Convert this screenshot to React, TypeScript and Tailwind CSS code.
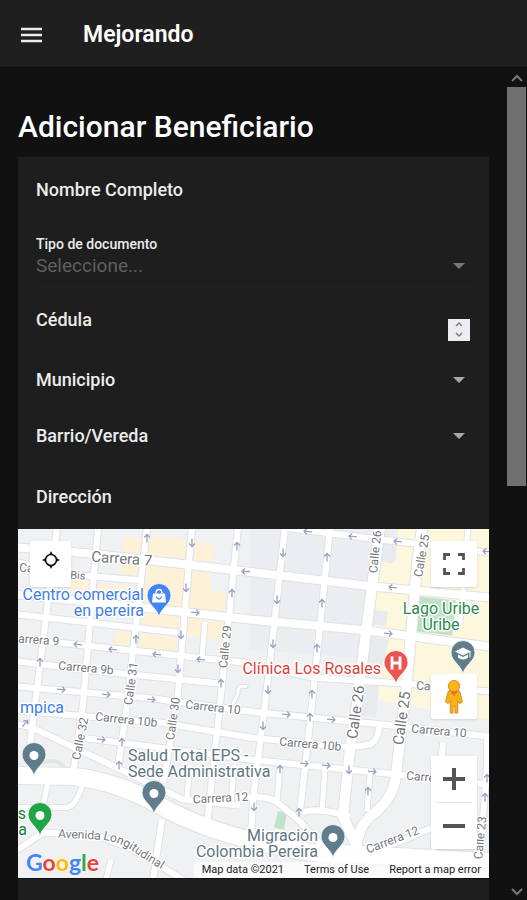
import React from "react";

type Road = { d: string; w: number };

const roads: Road[] = [
  { d: "M283 528L340 535L397 542L489 553", w: 6 },
  { d: "M18 548L90 554L143 560L255 573L373 587L489 598", w: 8 },
  { d: "M18 563L70 575L143 581", w: 6 },
  { d: "M18 595L143 608L250 620L367 631L489 647", w: 8 },
  { d: "M18 615L177 633", w: 6 },
  { d: "M18 640L57 643L243 663L313 678L417 685L489 692", w: 6 },
  { d: "M18 662L110 673L220 684", w: 6 },
  { d: "M18 687L153 699L250 712L383 725L489 737", w: 6 },
  { d: "M18 711L160 723L250 738L350 748L370 745Q377 743 380 725", w: 6 },
  { d: "M80 738L127 744L250 760L397 775L489 785", w: 6 },
  { d: "M18 725L32 728L110 765L183 800L240 806", w: 6 },
  { d: "M192 528L177 705L163 783", w: 6 },
  { d: "M147 528L127 705L118 768", w: 6 },
  { d: "M98 528L83 705L73 775", w: 6 },
  { d: "M57 528L47 610L35 705L30 745", w: 6 },
  { d: "M238 528L220 705L207 825", w: 6 },
  { d: "M285 528L265 705L253 800L251 840", w: 6 },
  { d: "M330 528L312 705L300 813", w: 6 },
  { d: "M468 528L460 625", w: 5 },
  { d: "M443 743L433 860", w: 6 },
  { d: "M487 737L487 767L480 860", w: 6 },
  { d: "M205 622L202 658", w: 5 },
  { d: "M48 783L43 807", w: 5 },
  { d: "M18 808L66 808Q75 808 82 787", w: 5 },
  { d: "M18 850L43 833L100 837L133 850L183 880", w: 6 },
  { d: "M162 820L153 880", w: 6 },
  { d: "M111 860L106 880", w: 5 },
  { d: "M280 766L277 802", w: 5 },
  { d: "M325 768L322 812", w: 5 },
  { d: "M370 774L367 812", w: 5 },
  { d: "M190 765L187 798", w: 5 },
  { d: "M234 765L231 806", w: 5 },
  { d: "M303 813Q315 807 350 817", w: 6 },
  { d: "M240 799Q268 794 280 805L300 822L325 850", w: 6 },
  { d: "M350 858L400 842L435 827", w: 6 },
  { d: "M380 528L367 625L357 705L350 750L343 817L356 845", w: 10 },
  { d: "M422 528L417 565L407 682L396 775Q394 800 370 817Q358 828 356 850", w: 10 },
  { d: "M12 776L75 777Q120 783 160 806T260 843T340 854L489 862", w: 17 },
];

const arrows: [number, number, number][] = [
  [147, 539, -90], [192, 543, 90], [237, 547, -90], [186, 588, 90], [232, 594, -90],
  [246, 572, 180], [195, 613, 5], [181, 635, 90], [136, 640, -90], [78, 645, 185],
  [113, 650, 185], [157, 655, 185], [201, 660, 185], [178, 669, 90], [40, 663, -90],
  [221, 684, -90], [61, 690, 5], [106, 695, 5], [151, 700, 5], [308, 532, 185],
  [353, 537, 185], [398, 542, 185], [283, 553, 90], [327, 558, -90], [393, 588, 185],
  [277, 600, 90], [322, 604, -90], [388, 634, 5], [273, 644, 90], [317, 649, -90],
  [268, 690, 90], [312, 695, -90], [487, 552, 185], [286, 715, 5], [331, 720, 5],
  [310, 718, -90], [263, 726, 90], [101, 740, 5], [122, 743, -90], [119, 766, -90],
  [280, 770, -90], [304, 764, 5], [326, 766, 5], [349, 770, 90], [372, 772, 5],
  [368, 792, -90], [299, 813, -90], [254, 807, 90], [485, 798, -90],
  [487, 779, -90], [25, 724, -50],
];

const streets: [string, number, number, number, number][] = [
  ["Carrera 7", 91, 562, 4, 15],
  ["Ca", 19, 572, 4, 12],
  ["Bis", 70, 579, 5, 11],
  ["arrera 9", 18, 643, 4, 12],
  ["Carrera 9b", 58, 670, 5, 12],
  ["Carrera 10", 185, 709, 6, 12],
  ["Carrera 10b", 95, 721, 6, 12],
  ["Carrera 10b", 279, 746, 5, 12],
  ["Carrera 10", 411, 733, 5, 12],
  ["Carrera 12", 193, 804, -3, 12],
  ["Carrera 12", 368, 854, -21, 12],
  ["Carrera", 406, 780, 5, 12],
  ["Carrera", 416, 690, 4, 12],
  ["Calle 29", 227, 669, -84, 12],
  ["Calle 31", 132, 706, -82, 12],
  ["Calle 30", 174, 741, -82, 12],
  ["Calle 32", 80, 761, -79, 12],
  ["Calle 26", 377, 574, -84, 12],
  ["Calle 25", 422, 578, -80, 12],
  ["Calle 26", 357, 740, -82, 15],
  ["Calle 25", 403, 746, -82, 15],
  ["Calle 23", 482, 860, -84, 12],
  ["Avenida", 58, 838, 3, 12],
];

function Pin({ x, y, color, children }: { x: number; y: number; color: string; children?: React.ReactNode }) {
  return (
    <g transform={`translate(${x} ${y})`}>
      <path d="M0 0C-1 -9 -12 -13 -12 -22A12 12 0 0 1 12 -22C12 -13 1 -9 0 0Z" fill={color} stroke="#fff" strokeWidth="0.8" />
      {children ?? <circle cy="-21" r="4.5" fill="#fff" />}
    </g>
  );
}

function MapCanvas() {
  return (
    <svg viewBox="18 529 471 350" preserveAspectRatio="xMidYMid slice" className="block h-full w-full font-[Roboto,sans-serif]" role="img" aria-label="Mapa de Pereira">
      <rect x="-500" y="0" width="1500" height="1500" fill="#f0f1f3" />
      <path d="M250 529H489V700H380V660L250 650Z" fill="#ebedf0" />
      <g fill="#fdf1d8">
        <path d="M124 537L145 539L140 576L120 574Z" />
        <path d="M149 536L214 544L213 562L147 555Z" />
        <path d="M147 566L186 570L180 612L143 604Z" />
        <path d="M193 571L211 574L210 590L227 593L223 613L188 609Z" />
        <path d="M72 580L88 582L86 600L69 598Z" />
        <path d="M98 584L136 588L133 604L96 600Z" />
        <path d="M144 613L180 617L178 630L142 626Z" />
        <path d="M116 631L131 633L128 646L113 644Z" />
        <path d="M140 634L177 638L174 652L139 648Z" />
        <path d="M188 618L226 622L222 640L185 636Z" />
        <path d="M398 529H489V720L430 710L375 700L384 655L370 625L378 560L396 562Z" fill="#fdf7de" />
      </g>
      <path d="M379 541L396 543L393 564L377 561ZM371 610L388 612L386 627L370 625ZM369 637L389 640L380 676L360 672ZM360 684L379 687L376 718L355 715Z" fill="#e8eaed" />
      <path d="M419 597L456 601L452 636L417 632Z" fill="#bfe3c9" />
      <path d="M278 812L287 812L284 830L274 828Z" fill="#bfe3c9" />
      <path d="M42 763Q60 758 64 769" fill="none" stroke="#dce9df" strokeWidth="4" />
      <g fill="none" stroke="#dfe2e6" strokeLinejoin="round">
        {roads.map((r, i) => <path key={i} d={r.d} strokeWidth={r.w + 2} />)}
      </g>
      <g fill="none" stroke="#fff" strokeLinejoin="round">
        {roads.map((r, i) => <path key={i} d={r.d} strokeWidth={r.w} />)}
      </g>
      <path d="M246 687Q237 685 238 694L233 704" fill="none" stroke="#d9dce1" strokeWidth="5" strokeLinecap="round" />
      <path d="M246 687Q237 685 238 694L233 704" fill="none" stroke="#fff" strokeWidth="3" strokeLinecap="round" />
      <g fill="none" stroke="#9c9fc3" strokeWidth="1.3">
        {arrows.map(([x, y, a], i) => (
          <path key={i} d="M-4 0H4M1 -3L4 0L1 3" transform={`translate(${x} ${y}) rotate(${a})`} />
        ))}
      </g>
      <g fill="#74777b" stroke="#fff" strokeWidth="2.5" strokeLinejoin="round" paintOrder="stroke">
        {streets.map(([t, x, y, a, s], i) => (
          <text key={i} fontSize={s} transform={`translate(${x} ${y}) rotate(${a})`}>{t}</text>
        ))}
        <path id="avenida" d="M103 840Q125 844 140 857L163 871" fill="none" stroke="none" />
        <text fontSize="12"><textPath href="#avenida">Longitudinal</textPath></text>
      </g>
      <g fontSize="16" stroke="#fff" strokeWidth="3" strokeLinejoin="round" paintOrder="stroke">
        <g fill="#3f7de8">
          <text x="144" y="600" textAnchor="end">Centro comercial</text>
          <text x="144" y="616" textAnchor="end">en pereira</text>
          <text x="64" y="713" textAnchor="end">mpica</text>
        </g>
        <text x="381" y="674" textAnchor="end" fill="#dc3f3b">Clínica Los Rosales</text>
        <g fill="#2c8a52" textAnchor="middle">
          <text x="441" y="614">Lago Uribe</text>
          <text x="441" y="630">Uribe</text>
        </g>
        <g fill="#16803c">
          <text x="26" y="819" textAnchor="end">s</text>
          <text x="27" y="835" textAnchor="end">a</text>
        </g>
        <g fill="#607680">
          <text x="128" y="761">Salud Total EPS -</text>
          <text x="128" y="777">Sede Administrativa</text>
          <text x="318" y="841" textAnchor="end">Migración</text>
          <text x="318" y="857" textAnchor="end">Colombia Pereira</text>
        </g>
      </g>
      <Pin x={159} y={618} color="#4285f4">
        <path d="M-6 -24H6L7 -15H-7Z" fill="#fff" />
        <path d="M-3 -24Q-3 -28 0 -28T3 -24" fill="none" stroke="#fff" strokeWidth="1.5" />
        <path d="M-3 -21Q0 -16 3 -21" fill="none" stroke="#4285f4" strokeWidth="1.3" />
      </Pin>
      <Pin x={396} y={685} color="#ea5550">
        <path d="M-4 -28V-15M4 -28V-15M-4 -21.500H4" fill="none" stroke="#fff" strokeWidth="2.8" />
      </Pin>
      <Pin x={463} y={675} color="#607d8b">
        <path d="M-8 -23L0 -27L8 -23L0 -19Z" fill="#fff" />
        <path d="M-5 -20L0 -17.500L5 -20V-17Q0 -13 -5 -17Z" fill="#fff" />
        <path d="M7 -23V-17" stroke="#fff" />
      </Pin>
      <Pin x={34} y={777} color="#607d8b" />
      <Pin x={154} y={815} color="#607d8b" />
      <Pin x={333} y={859} color="#607d8b" />
      <Pin x={40} y={837} color="#1fa446" />
    </svg>
  );
}

function GoogleLogo() {
  return (
    <a href="#google" aria-label="Google" className="absolute bottom-1 left-2 font-[Lato,sans-serif] text-[23px] leading-6 font-bold [text-shadow:0_0_2px_#fff]">
      <span className="text-[#4285f4]">G</span>
      <span className="text-[#ea4335]">o</span>
      <span className="text-[#fbbc05]">o</span>
      <span className="text-[#4285f4]">g</span>
      <span className="text-[#34a853]">l</span>
      <span className="text-[#ea4335]">e</span>
    </a>
  );
}

function Caret({ dim = false }: { dim?: boolean }) {
  return (
    <svg viewBox="0 0 12 6" className={`pointer-events-none mr-[6px] h-[6px] w-3 shrink-0 ${dim ? "text-[#777]" : "text-[#a8a8a8]"}`} fill="currentColor" aria-hidden="true">
      <path d="M0 0H12L6 6Z" />
    </svg>
  );
}

function TextRow({ id, label }: { id: string; label: string }) {
  return (
    <div className="flex h-[65px] items-center gap-4">
      <label htmlFor={id} className="shrink-0">{label}</label>
      <input id={id} type="text" className="min-w-0 flex-1 bg-transparent outline-none" />
    </div>
  );
}

function SelectRow({ id, label }: { id: string; label: string }) {
  return (
    <div className="flex h-14 items-center gap-4">
      <label htmlFor={id} className="shrink-0">{label}</label>
      <select id={id} defaultValue="" className="min-w-0 flex-1 appearance-none bg-transparent outline-none">
        <option value="" />
      </select>
      <Caret />
    </div>
  );
}

const mapButton = "absolute right-3 flex w-[46px] items-center justify-center rounded-xs bg-white shadow-sm";

export default function App() {
  return (
    <div className="flex h-screen flex-col overflow-hidden bg-[#111] font-[Roboto,sans-serif] text-[#ececec]">
      <header className="flex h-[68px] shrink-0 items-center gap-10 border-b border-[#0a0a0a] bg-[#1f1f1f] px-5 pb-px">
        <button type="button" aria-label="Abrir menú" className="pt-1">
          <svg viewBox="0 0 23 16" className="h-4 w-[23px]" stroke="currentColor" strokeWidth="2.400" aria-hidden="true">
            <path d="M1 2H22M1 8H22M1 14H22" />
          </svg>
        </button>
        <span className="pt-1 text-[23px] leading-7 font-semibold text-white">Mejorando</span>
      </header>

      <div className="flex min-h-0 flex-1">
        <main className="min-w-0 flex-1 overflow-hidden px-[18px] pt-[41px]">
          <h1 className="mb-3 text-[30px] leading-9 font-medium text-white">Adicionar Beneficiario</h1>
          <form className="bg-[#1e1e1e] pb-10 text-[18px] leading-6 font-medium">
            <div className="px-[18px]">
              <TextRow id="nombre" label="Nombre Completo" />
              <div className="flex h-[65px] items-end border-b border-[#222] pb-2">
                <div className="flex min-w-0 flex-1 flex-col">
                  <label htmlFor="tipo" className="text-[14px] leading-5">Tipo de documento</label>
                  <select id="tipo" defaultValue="" className="h-6 w-full appearance-none bg-transparent text-[19px] font-normal text-[#5f5f5f] outline-none">
                    <option value="">Seleccione...</option>
                  </select>
                </div>
                <span className="flex h-6 items-center"><Caret dim /></span>
              </div>
              <div className="flex h-[65px] items-center gap-4">
                <label htmlFor="cedula" className="shrink-0">Cédula</label>
                <input id="cedula" type="number" className="min-w-0 flex-1 appearance-none bg-transparent outline-none [&::-webkit-inner-spin-button]:appearance-none" />
                <span className="mt-5 mr-px flex h-[22px] w-[22px] flex-col bg-[#ededf2] py-px text-[#777]">
                  <button type="button" aria-label="Aumentar" className="flex flex-1 items-center justify-center">
                    <svg viewBox="0 0 8 5" className="h-[5px] w-2" fill="none" stroke="currentColor" strokeWidth="1.400"><path d="M1 4L4 1L7 4" /></svg>
                  </button>
                  <button type="button" aria-label="Disminuir" className="flex flex-1 items-center justify-center">
                    <svg viewBox="0 0 8 5" className="h-[5px] w-2" fill="none" stroke="currentColor" strokeWidth="1.400"><path d="M1 1L4 4L7 1" /></svg>
                  </button>
                </span>
              </div>
              <SelectRow id="municipio" label="Municipio" />
              <SelectRow id="barrio" label="Barrio/Vereda" />
              <TextRow id="direccion" label="Dirección" />
            </div>

            <section aria-label="Mapa" className="relative h-[350px] overflow-hidden border-b border-[#111] font-normal text-[#555]">
              <MapCanvas />
              <button type="button" aria-label="Mi ubicación" className="absolute top-3 left-3 flex h-[46px] w-[41px] items-center justify-center rounded-xs bg-white pb-2 text-[#111] shadow-sm">
                <svg viewBox="0 0 18 18" className="h-[18px] w-[18px]" fill="none" stroke="currentColor" aria-hidden="true">
                  <circle cx="9" cy="9" r="5.500" strokeWidth="1.600" />
                  <path d="M9 0L11 4H7ZM9 18L11 14H7ZM0 9L4 7V11ZM18 9L14 7V11Z" fill="currentColor" stroke="none" />
                </svg>
              </button>
              <button type="button" aria-label="Pantalla completa" className={`${mapButton} top-3 h-[46px]`}>
                <svg viewBox="0 0 22 22" className="h-[22px] w-[22px]" fill="none" stroke="currentColor" strokeWidth="2.800" aria-hidden="true">
                  <path d="M1.500 7V1.500H7M15 1.500H20.500V7M20.500 15V20.500H15M7 20.500H1.500V15" />
                </svg>
              </button>
              <button type="button" aria-label="Street View" className={`${mapButton} top-[145px] h-[45px]`}>
                <svg viewBox="0 0 24 38" className="h-9 w-6" aria-hidden="true">
                  <path d="M6 13Q12 9 18 13L21 24L18 26L16 23V36H13V29H11V36H8V23L6 26L3 24Z" fill="#f5b01c" stroke="#d98f12" strokeLinejoin="round" />
                  <circle cx="12" cy="7.500" r="6" fill="#fab41e" stroke="#d98f12" />
                  <path d="M7 12Q12 15 17 12L12 18Z" fill="#e8711c" />
                </svg>
              </button>
              <div className={`${mapButton} top-[227px] h-[93px] flex-col`}>
                <button type="button" aria-label="Acercar" className="flex w-full flex-1 items-center justify-center">
                  <svg viewBox="0 0 22 22" className="h-[22px] w-[22px]" stroke="currentColor" strokeWidth="4" aria-hidden="true"><path d="M0 11H22M11 0V22" /></svg>
                </button>
                <span className="h-px w-9 bg-[#e6e6e6]" />
                <button type="button" aria-label="Alejar" className="flex w-full flex-1 items-center justify-center">
                  <svg viewBox="0 0 22 4" className="h-1 w-[22px]" stroke="currentColor" strokeWidth="4" aria-hidden="true"><path d="M0 2H22" /></svg>
                </button>
              </div>
              <GoogleLogo />
              <div className="absolute right-0 bottom-0 flex gap-5 bg-white/70 px-2 text-[11px] leading-4 text-[#222]">
                <span>Map data ©2021</span>
                <a href="#terminos">Terms of Use</a>
                <a href="#error">Report a map error</a>
              </div>
            </section>
          </form>
        </main>

        <div className="flex w-5 shrink-0 flex-col text-[#777]">
          <button type="button" aria-label="Subir" className="flex h-[19px] shrink-0 items-center justify-center">
            <svg viewBox="0 0 12 8" className="h-2 w-3" fill="none" stroke="currentColor" strokeWidth="2"><path d="M1 7L6 2L11 7" /></svg>
          </button>
          <div className="min-h-0 flex-1">
            <div className="mr-px h-1/2 bg-[#707070]" />
          </div>
          <button type="button" aria-label="Bajar" className="flex h-4 shrink-0 items-center justify-center">
            <svg viewBox="0 0 12 8" className="h-2 w-3" fill="none" stroke="currentColor" strokeWidth="2"><path d="M1 1L6 6L11 1" /></svg>
          </button>
        </div>
      </div>
    </div>
  );
}
